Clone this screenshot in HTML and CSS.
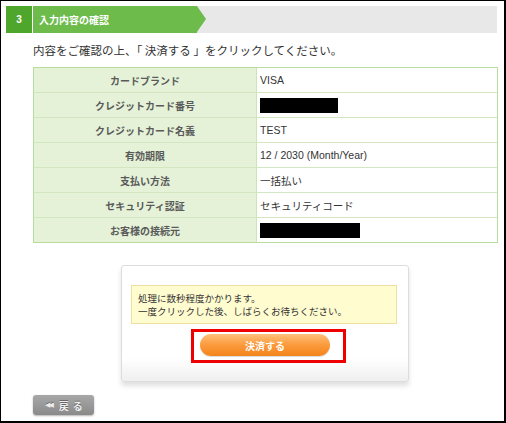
FILE: index.html
```html
<!DOCTYPE html>
<html lang="ja">
<head>
<meta charset="utf-8">
<link rel="stylesheet" href="styles.css">
</head>
<body>
<div class="frame">
  <div class="steps">
    <div class="step-num">3</div>
    <div class="step-label">入力内容の確認</div>
    <div class="step-arrow"></div>
    <div class="step-rest"></div>
  </div>
  <div class="content">
    <p class="lead">内容をご確認の上、「 決済する 」をクリックしてください。</p>
    <div class="confirm">
      <div class="row"><div class="lbl">カードブランド</div><div class="val">VISA</div></div>
      <div class="row"><div class="lbl">クレジットカード番号</div><div class="val"><span class="redact r1"></span></div></div>
      <div class="row"><div class="lbl">クレジットカード名義</div><div class="val">TEST</div></div>
      <div class="row"><div class="lbl">有効期限</div><div class="val">12 / 2030 (Month/Year)</div></div>
      <div class="row"><div class="lbl">支払い方法</div><div class="val">一括払い</div></div>
      <div class="row"><div class="lbl">セキュリティ認証</div><div class="val">セキュリティコード</div></div>
      <div class="row last"><div class="lbl">お客様の接続元</div><div class="val"><span class="redact r2"></span></div></div>
    </div>
    <div class="panel">
      <div class="notice"><div>処理に数秒程度かかります。</div><div>一度クリックした後、しばらくお待ちください。</div></div>
      <div class="highlight">
        <div class="pay-btn">決済する</div>
      </div>
    </div>
    <div class="back-btn"><span class="back-icon">◀◀</span><span class="back-text">戻る</span></div>
  </div>
</div>
</body>
</html>
```

FILE: styles.css
```css
html, body {
  margin: 0;
  padding: 0;
  background: #ffffff;
}
body {
  font-family: "Liberation Sans", "Noto Sans CJK JP", sans-serif;
  color: #333333;
}
.frame {
  box-sizing: border-box;
  width: 506px;
  height: 423px;
  border-style: solid;
  border-color: #000000;
  border-width: 1px 2px 2px 1px;
  padding: 5px 7px 0 5px;
  overflow: hidden;
}
.steps {
  display: flex;
  height: 27px;
  align-items: stretch;
}
.step-num {
  width: 26px;
  background: #4ea62c;
  color: #ffffff;
  font-weight: bold;
  font-size: 10px;
  display: flex;
  align-items: center;
  justify-content: center;
  margin-right: 1px;
}
.step-label {
  width: 158px;
  background: #6dbb4b;
  color: #ffffff;
  font-weight: bold;
  font-size: 10px;
  display: flex;
  align-items: center;
  padding-left: 6px;
  font-family: "Noto Sans CJK JP", sans-serif;
}
.step-arrow {
  width: 9px;
  background: #e8e8e8;
  position: relative;
}
.step-arrow::before {
  content: "";
  position: absolute;
  left: 0;
  top: 0;
  border-style: solid;
  border-width: 13.5px 0 13.5px 9px;
  border-color: transparent transparent transparent #6dbb4b;
}
.step-rest {
  flex: 1;
  background: #e8e8e8;
}
.content {
  padding-left: 27px;
  display: flex;
  flex-direction: column;
}
.lead {
  margin: 8px 0 0 0;
  height: 18px;
  line-height: 18px;
  font-size: 11.5px;
  font-family: "Noto Sans CJK JP", sans-serif;
  color: #333333;
}
.confirm {
  margin-top: 8px;
  width: 463px;
  border: 1px solid #b9dc9f;
  display: flex;
  flex-direction: column;
}
.row {
  display: flex;
  height: 24px;
  border-bottom: 1px solid #d3e6c2;
}
.row.last {
  border-bottom: none;
}
.lbl {
  width: 222px;
  background: #e5f2d8;
  border-right: 1px solid #cde3ba;
  display: flex;
  align-items: center;
  justify-content: center;
  font-size: 10px;
  font-weight: bold;
  color: #5a5a5a;
  font-family: "Noto Sans CJK JP", sans-serif;
}
.val {
  flex: 1;
  display: flex;
  align-items: center;
  padding-left: 3px;
  font-size: 10.5px;
  color: #333333;
}
.redact {
  display: block;
  height: 15px;
  background: #000000;
}
.r1 { width: 78px; }
.r2 { width: 100px; }
.panel {
  align-self: flex-start;
  margin-left: 88px;
  margin-top: 22px;
  box-sizing: border-box;
  width: 288px;
  height: 117px;
  border: 1px solid #dddddd;
  border-radius: 3px;
  background: linear-gradient(to bottom, #ffffff 0%, #ffffff 80%, #efefef 100%);
  box-shadow: 0 4px 5px rgba(0, 0, 0, 0.12);
  padding: 19px 0 0 9px;
  display: flex;
  flex-direction: column;
}
.notice {
  box-sizing: border-box;
  width: 266px;
  height: 39px;
  background: #fffcd0;
  border: 1px solid #f0dfa0;
  font-size: 9.5px;
  line-height: 13px;
  padding: 6px 0 0 6px;
  color: #333333;
  font-family: "Noto Sans CJK JP", sans-serif;
}
.highlight {
  box-sizing: border-box;
  margin-top: 5px;
  margin-left: 60px;
  width: 155px;
  height: 34px;
  border: 3px solid #ee0000;
  padding: 2px 0 0 6px;
}
.pay-btn {
  width: 130px;
  height: 22px;
  border-radius: 11px;
  background: linear-gradient(to bottom, #ffc07a 0%, #fb9a3c 50%, #f4841c 100%);
  box-shadow: 0 1px 1px rgba(0, 0, 0, 0.15);
  color: #ffffff;
  font-size: 10px;
  font-weight: bold;
  display: flex;
  align-items: center;
  justify-content: center;
  font-family: "Noto Sans CJK JP", sans-serif;
}
.back-btn {
  align-self: flex-start;
  margin-top: 13px;
  width: 61px;
  height: 20px;
  box-sizing: border-box;
  border-radius: 3px;
  background: linear-gradient(to bottom, #a8a8a8 0%, #8a8a8a 100%);
  box-shadow: 0 1px 2px rgba(0, 0, 0, 0.3);
  display: flex;
  align-items: center;
  padding-left: 12px;
  color: #eeeeee;
  font-size: 10px;
  font-weight: bold;
  font-family: "Noto Sans CJK JP", sans-serif;
  text-shadow: 0 -1px 0 rgba(0, 0, 0, 0.35);
}
.back-icon {
  font-size: 7px;
  letter-spacing: -2px;
  margin-right: 7px;
  font-family: "DejaVu Sans", sans-serif;
}
.back-text {
  letter-spacing: 4px;
}
```
